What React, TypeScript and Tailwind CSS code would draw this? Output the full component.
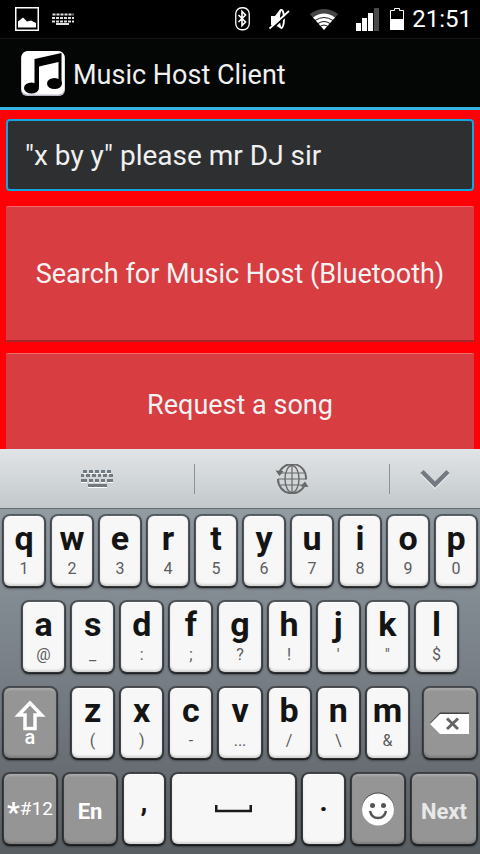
import type { ReactNode } from "react";

const FONT = "font-['Roboto','Noto_Sans',sans-serif]";

const ROW_ONE = [
  ["q", "1"], ["w", "2"], ["e", "3"], ["r", "4"], ["t", "5"],
  ["y", "6"], ["u", "7"], ["i", "8"], ["o", "9"], ["p", "0"],
];
const ROW_TWO = [
  ["a", "@"], ["s", "_"], ["d", ":"], ["f", ";"], ["g", "?"],
  ["h", "!"], ["j", "'"], ["k", '"'], ["l", "$"],
];
const ROW_THREE = [
  ["z", "("], ["x", ")"], ["c", "-"], ["v", "..."], ["b", "/"], ["n", "\\"], ["m", "&"],
];

const LIGHT =
  "bg-[#f7f7f7] text-[#141414] shadow-[inset_0_-2px_2px_#d4d4d4,inset_0_1px_1px_#ffffff,0_1px_2px_rgba(0,0,0,0.35)]";
const DARK =
  "bg-[#959595] text-white shadow-[inset_0_-2px_2px_#7d7d7d,inset_0_2px_2px_#aaaaaa,0_1px_2px_rgba(0,0,0,0.35)]";

function Key({
  label,
  dark = false,
  size,
  children,
}: {
  label?: string;
  dark?: boolean;
  size: string;
  children: ReactNode;
}) {
  return (
    <button
      type="button"
      aria-label={label}
      className={`flex h-[74px] min-w-0 flex-col items-center rounded-lg border-2 border-t-black/35 border-x-black/40 border-b-black/60 bg-clip-padding ${dark ? DARK : LIGHT} ${size}`}
    >
      {children}
    </button>
  );
}

function LetterKey({ letter, alt }: { letter: string; alt: string }) {
  return (
    <Key size="flex-1">
      <span className="mt-0.5 text-[34px] leading-10 font-bold">{letter}</span>
      <span className="mt-px text-base leading-5 text-[#5c5c5c]">{alt}</span>
    </Key>
  );
}

function StatusBar() {
  return (
    <header className="flex h-[38px] shrink-0 items-center bg-black pr-2 pl-[15px] text-white">
      <svg width="24" height="24" viewBox="0 0 24 24" className="shrink-0">
        <rect x="0.75" y="0.75" width="22.5" height="22.5" fill="none" stroke="#fff" strokeWidth="1.5" />
        <path d="M3 20.500V14.500L8 10.500L12 14.500L16 13.500L19 15L21 16V20.500z" fill="#fff" />
      </svg>
      <svg width="22" height="12" viewBox="0 0 22 12" className="ml-[13px] shrink-0">
        <path
          d="M0.500 1.500h21M0 5h22M0 8.500h22"
          stroke="#e0e0e0"
          strokeWidth="2"
          strokeDasharray="3 1"
        />
        <path d="M4 11h13" stroke="#e0e0e0" strokeWidth="2" />
      </svg>
      <div className="flex-1" />
      <svg width="16" height="24" viewBox="0 0 16 24" className="shrink-0">
        <rect x="0.750" y="0.750" width="13.500" height="22" rx="6" fill="none" stroke="#fff" strokeWidth="1.300" />
        <path d="M3.500 8l7 7-3.500 3.500V4.500L10.500 8l-7 7" fill="none" stroke="#fff" strokeWidth="1.600" />
      </svg>
      <svg width="21" height="22" viewBox="0 0 21 22" className="ml-[18px] shrink-0">
        <path d="M2 8h4l5-6.500h1.500v18.500H11L6 17H2z" fill="#fff" />
        <ellipse cx="12.500" cy="11" rx="2.500" ry="9" fill="#000" stroke="#fff" strokeWidth="1.800" />
        <path d="M1.500 22L21 4.500" stroke="#000" strokeWidth="2" />
        <path d="M0.500 20.500L20 3" stroke="#fff" strokeWidth="1.800" />
      </svg>
      <svg width="28" height="21" viewBox="0 0 28 21" className="ml-5 shrink-0">
        <path d="M0 5Q14 -5 28 5l-3.500 4.500Q14 2 3.500 9.500z" fill="#454545" />
        <path d="M3 8.500Q14 .5 25 8.500L14 21z" fill="#fff" />
        <path d="M5 11.500Q14 5.500 23 11.500M8 14.500Q14 10.500 20 14.500M10.500 17Q14 15 17.500 17" fill="none" stroke="#000" strokeWidth="0.900" />
      </svg>
      <svg width="23" height="23" viewBox="0 0 23 23" className="ml-[18px] shrink-0">
        <path d="M0 15h5v8H0zM6 10h5v13H6zM12 5h5v18h-5z" fill="#fff" />
        <path d="M18 0h5v23h-5z" fill="#4a4a4a" />
      </svg>
      <svg width="14" height="22" viewBox="0 0 14 22" className="ml-[11px] shrink-0">
        <path d="M0.500 2.500h4v-2h5v2h4v19h-13z" fill="none" stroke="#fff" />
        <path d="M0 11h14v11H0z" fill="#fff" />
      </svg>
      <time className="ml-2 text-2xl leading-8">21:51</time>
    </header>
  );
}

function TitleBar() {
  return (
    <div className="flex h-[72px] shrink-0 items-center border-t border-b-3 border-t-[#151515] border-b-[#33b5e5] bg-[#040606] pl-[21px]">
      <svg width="44" height="45" viewBox="0 0 44 45" className="shrink-0">
        <rect y="1" width="44" height="44" rx="6" fill="#b9b9c4" />
        <rect x="0.500" width="43" height="43.500" rx="6" fill="#fff" />
        <path d="M13.500 8L40.500 2v30h-3V11L18 15.500V36h-4.500z" fill="#000" />
        <ellipse cx="10.500" cy="37" rx="7.500" ry="5.500" fill="#000" />
        <ellipse cx="33.500" cy="32.500" rx="7.500" ry="5.500" fill="#000" />
      </svg>
      <h1 className="mt-1 ml-2 text-[27px] leading-8 text-[#f0f0f0]">Music Host Client</h1>
    </div>
  );
}

function ActionButton({ size, children }: { size: string; children: ReactNode }) {
  return (
    <button
      type="button"
      className={`w-full shrink-0 rounded-xs border-t border-b-2 border-t-[#f26a6c] border-b-[#a3262a] bg-[#d73d41] text-[27px] leading-8 text-[#f3f3f3] ${size}`}
    >
      {children}
    </button>
  );
}

function Toolbar() {
  return (
    <div className="flex h-[60px] items-center border-b border-[#666e73] bg-linear-to-b from-[#e1e4e7] to-[#c3c9cb]">
      <button type="button" aria-label="Keyboard layout" className="flex h-[30px] flex-[195] items-center justify-center border-r border-[#8c9296]">
        <svg width="32" height="18" viewBox="0 0 32 18">
          <g fill="none" stroke="#fff" strokeWidth="3" transform="translate(0 1)">
            <path d="M2 1.500h28" strokeDasharray="4 2" />
            <path d="M0 10.500h6M8 10.500h4M14 10.500h4M20 10.500h4M26 10.500h6" />
            <path d="M7 15.500h19" />
          </g>
          <g fill="none" stroke="#727a81" strokeWidth="3">
            <path d="M2 1.500h28" strokeDasharray="4 2" />
            <path d="M0 5.500h3M5 5.500h4M11 5.500h4M17 5.500h3M22 5.500h4M28 5.500h4" />
            <path d="M0 10.500h6M8 10.500h4M14 10.500h4M20 10.500h4M26 10.500h6" />
            <path d="M7 15.500h19" />
          </g>
        </svg>
      </button>
      <button type="button" aria-label="Change language" className="flex h-[30px] flex-[195] items-center justify-center border-r border-[#8c9296]">
        <svg width="34" height="30" viewBox="0 0 34 30" fill="none" stroke="#686868">
          <path d="M4 9A14 14 0 0 1 31 15.500M30 20.500A14 14 0 0 1 3 15" strokeWidth="2" />
          <path d="M17 1v28M3 15h28M5 9h24M5 21h24" strokeWidth="1.200" />
          <ellipse cx="17" cy="15" rx="7" ry="13.500" strokeWidth="1.400" />
          <path d="M0.500 6.500l8 .5-4 5zM33.500 23l-8-.5 4.500-5z" fill="#686868" stroke="none" />
        </svg>
      </button>
      <button type="button" aria-label="Hide keyboard" className="flex h-[30px] flex-[90] items-center justify-center">
        <svg width="30" height="20" viewBox="0 0 30 20" fill="none">
          <path d="M2 4l13 13L28 4" stroke="#eee" strokeWidth="4.500" />
          <path d="M2 2.500l13 13 13-13" stroke="#737b82" strokeWidth="4.500" />
        </svg>
      </button>
    </div>
  );
}

function Keyboard() {
  return (
    <div className="flex flex-col gap-3 bg-linear-to-b from-[#919ba2] via-[#71777e] via-60% to-[#595e62] px-0.5 pt-[5px] pb-2">
      <div className="flex gap-1">
        {ROW_ONE.map(([letter, alt]) => (
          <LetterKey key={letter} letter={letter} alt={alt} />
        ))}
      </div>
      <div className="flex gap-1 px-[19px]">
        {ROW_TWO.map(([letter, alt]) => (
          <LetterKey key={letter} letter={letter} alt={alt} />
        ))}
      </div>
      <div className="flex gap-3">
        <Key dark size="flex-[52]" label="Shift">
          <svg width="32" height="31" viewBox="0 0 32 31" className="mt-3">
            <path d="M16 3L4.500 15H11v13.500h10V15h6.500z" fill="none" stroke="#fff" strokeWidth="3.500" />
          </svg>
          <span className="-mt-1 text-xl leading-5 font-medium">a</span>
        </Key>
        <div className="flex min-w-0 flex-[340] gap-1">
          {ROW_THREE.map(([letter, alt]) => (
            <LetterKey key={letter} letter={letter} alt={alt} />
          ))}
        </div>
        <Key dark size="flex-[52]" label="Delete">
          <svg width="40" height="22" viewBox="0 0 40 22" className="my-auto">
            <path d="M0 11L10 0.500h29V21H10z" fill="#444" />
            <path d="M0 12L10 2h29v20H10z" fill="#fff" />
            <path d="M17 6.500l11 10.500M28 6.500l-11 10.500" stroke="#666" strokeWidth="3" />
          </svg>
        </Key>
      </div>
      <div className="flex gap-1">
        <Key dark size="flex-[52]" label="Symbols">
          <span className="my-auto flex items-center text-[19px] leading-6">
            <span className="mt-2 text-[28px] font-bold">*</span>#12
          </span>
        </Key>
        <Key dark size="flex-[52]">
          <span className="mt-6 text-[22px] leading-7 font-bold">En</span>
        </Key>
        <Key size="flex-[40]">
          <span className="mt-2 text-[28px] leading-10 font-bold">,</span>
        </Key>
        <Key size="flex-[123]" label="Space">
          <svg width="37" height="8" viewBox="0 0 37 8" className="my-auto">
            <path d="M1.250 0v6h34.500V0" fill="none" stroke="#1a1a1a" strokeWidth="2.500" />
          </svg>
        </Key>
        <Key size="flex-[41]">
          <span className="mt-2 text-[28px] leading-10 font-bold">.</span>
        </Key>
        <Key dark size="flex-[52]" label="Emoji">
          <svg width="34" height="34" viewBox="0 0 34 34" className="my-auto">
            <circle cx="17" cy="16.500" r="16" fill="#444" />
            <circle cx="17" cy="17.500" r="16" fill="#fff" />
            <circle cx="11.500" cy="13.500" r="2.500" fill="#555" />
            <circle cx="22.500" cy="13.500" r="2.500" fill="#555" />
            <path d="M9 19q1.500 7 8 7t8-7" fill="none" stroke="#555" strokeWidth="2.400" />
          </svg>
        </Key>
        <Key dark size="flex-[64]">
          <span className="mt-6 text-[22px] leading-7 font-bold text-[#e8e8e8]">Next</span>
        </Key>
      </div>
    </div>
  );
}

export default function App() {
  return (
    <div className={`flex h-screen flex-col overflow-hidden bg-[#ff0006] ${FONT}`}>
      <StatusBar />
      <TitleBar />
      <main className="flex min-h-0 flex-1 flex-col overflow-hidden px-1.5 pt-[9px]">
        <input
          type="text"
          aria-label="Song request"
          defaultValue={'"x by y" please mr DJ sir'}
          className="h-[72px] w-full shrink-0 rounded-sm border-2 border-[#12a5de] bg-[#2e2f31] px-[17px] text-[28px] text-[#f0f0f0] outline-none"
        />
        <div className="mt-[15px] flex flex-col gap-[11px]">
          <ActionButton size="h-[136px]">Search for Music Host (Bluetooth)</ActionButton>
          <ActionButton size="h-[104px]">Request a song</ActionButton>
        </div>
      </main>
      <section aria-label="On-screen keyboard" className="shrink-0">
        <Toolbar />
        <Keyboard />
      </section>
    </div>
  );
}
